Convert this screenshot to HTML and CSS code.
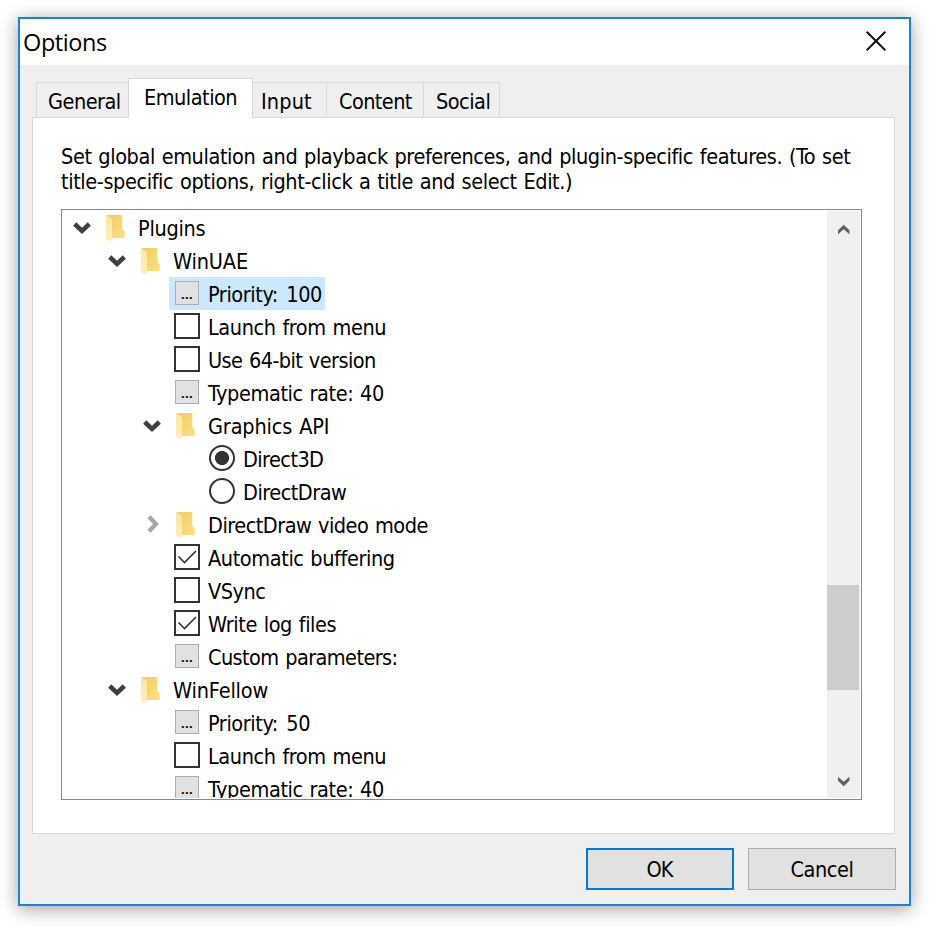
FILE: index.html
```html
<!DOCTYPE html>
<html lang="en">
<head>
<meta charset="utf-8">
<title>Options</title>
<link rel="stylesheet" href="styles.css">
</head>
<body>
<svg class="defs" aria-hidden="true">
  <defs>
    <linearGradient id="back" x1="0" y1="0" x2="1" y2="1"><stop offset="0" stop-color="#edcb68"/><stop offset="1" stop-color="#ffdf80"/></linearGradient>
    <linearGradient id="flap" x1="0" y1="0" x2="0" y2="1"><stop offset="0" stop-color="#ffe69e"/><stop offset="1" stop-color="#ffefbd"/></linearGradient>
    <symbol id="folder" viewBox="0 0 26 33">
      <path fill="url(#back)" d="M2 4H18.3V18L20.7 20.5V27H7V8Z"/>
      <path fill="url(#flap)" d="M2 4L8 8.3V27.3L6.7 30.8L2 28Z"/>
    </symbol>
    <symbol id="open" viewBox="0 0 37 33"><path fill="none" stroke="#404040" stroke-width="4.5" d="M12.7 13L20 19.9L27.3 13"/></symbol>
    <symbol id="closed" viewBox="0 0 37 33"><path fill="none" stroke="#a6a6a6" stroke-width="4.3" d="M17 8.8L24 16L17 23.2"/></symbol>
    <symbol id="tick" viewBox="0 0 22 22"><path fill="none" stroke="#333" stroke-width="1.6" d="M2.5 10.5L8.5 16.5L20 5"/></symbol>
  </defs>
</svg>
<main class="dialog">
  <header class="titlebar">
    <h1 class="title">Options</h1>
    <svg class="close" viewBox="0 0 20 20"><path d="M.7.7L19.3 19.3M19.3.7L.7 19.3"/></svg>
  </header>
  <nav class="tabs">
    <div class="tab general tighter">General</div>
    <div class="tab active emulation tighter">Emulation</div>
    <div class="tab input wide">Input</div>
    <div class="tab content tight">Content</div>
    <div class="tab social tighter">Social</div>
  </nav>
  <section class="pane">
    <p class="intro">Set global emulation and playback preferences, and plugin-specific features. (To set<br>title-specific options, right-click a title and select Edit.)</p>
    <div class="tree">
      <div class="rows">
        <div class="row"><svg class="chev"><use href="#open"/></svg><div class="item"><svg class="folder"><use href="#folder"/></svg><span class="label">Plugins</span></div></div>
        <div class="row l1"><svg class="chev"><use href="#open"/></svg><div class="item"><svg class="folder"><use href="#folder"/></svg><span class="label loose">WinUAE</span></div></div>
        <div class="row l2"><span class="chev"></span><div class="item selected"><span class="more">...</span><span class="label value">Priority: 100</span></div></div>
        <div class="row l2"><span class="chev"></span><div class="item"><span class="check"></span><span class="label snug">Launch from menu</span></div></div>
        <div class="row l2"><span class="chev"></span><div class="item"><span class="check"></span><span class="label tight">Use 64-bit version</span></div></div>
        <div class="row l2"><span class="chev"></span><div class="item"><span class="more">...</span><span class="label snug">Typematic rate: 40</span></div></div>
        <div class="row l2"><svg class="chev"><use href="#open"/></svg><div class="item"><svg class="folder"><use href="#folder"/></svg><span class="label loose">Graphics API</span></div></div>
        <div class="row l3"><span class="chev"></span><div class="item"><span class="radio on"></span><span class="label tight">Direct3D</span></div></div>
        <div class="row l3"><span class="chev"></span><div class="item"><span class="radio"></span><span class="label tighter">DirectDraw</span></div></div>
        <div class="row l2"><svg class="chev"><use href="#closed"/></svg><div class="item"><svg class="folder"><use href="#folder"/></svg><span class="label tighter">DirectDraw video mode</span></div></div>
        <div class="row l2"><span class="chev"></span><div class="item"><span class="check"><svg class="tick"><use href="#tick"/></svg></span><span class="label snug">Automatic buffering</span></div></div>
        <div class="row l2"><span class="chev"></span><div class="item"><span class="check"></span><span class="label tighter">VSync</span></div></div>
        <div class="row l2"><span class="chev"></span><div class="item"><span class="check"><svg class="tick"><use href="#tick"/></svg></span><span class="label snug">Write log files</span></div></div>
        <div class="row l2"><span class="chev"></span><div class="item"><span class="more">...</span><span class="label tight">Custom parameters:</span></div></div>
        <div class="row l1"><svg class="chev"><use href="#open"/></svg><div class="item"><svg class="folder"><use href="#folder"/></svg><span class="label loose">WinFellow</span></div></div>
        <div class="row l2"><span class="chev"></span><div class="item"><span class="more">...</span><span class="label value">Priority: 50</span></div></div>
        <div class="row l2"><span class="chev"></span><div class="item"><span class="check"></span><span class="label snug">Launch from menu</span></div></div>
        <div class="row l2"><span class="chev"></span><div class="item"><span class="more">...</span><span class="label snug">Typematic rate: 40</span></div></div>
      </div>
      <div class="scrollbar">
        <svg class="arrow" viewBox="0 0 33 36"><path d="M16.7 13.8L22.4 19.3V23.2L16.7 18.2L11 23.2V19.3Z"/></svg>
        <div class="track"><div class="thumb"></div></div>
        <svg class="arrow" viewBox="0 0 33 36"><path d="M16.7 24.2L22.4 18.7V14.8L16.7 19.8L11 14.8V18.7Z"/></svg>
      </div>
    </div>
  </section>
  <footer class="footer">
    <button class="btn primary">OK</button>
    <button class="btn">Cancel</button>
  </footer>
</main>
</body>
</html>
```
FILE: styles.css
```css
* { box-sizing: border-box; }
body {
  margin: 0;
  padding: 17px 0 0 18px;
  height: 928px;
  overflow: hidden;
  background: #fff;
  color: #000;
  font: 21.5px/26px "DejaVu Sans Condensed", "DejaVu Sans", sans-serif;
  letter-spacing: -0.28px;
  word-spacing: 1px;
}
.defs { position: absolute; width: 0; height: 0; }
.dialog {
  display: flex;
  flex-direction: column;
  width: 893px;
  height: 889px;
  border: 2px solid #1883d7;
  background: #efefef;
  box-shadow: 0 3px 17px rgba(0, 0, 0, .38);
}
.titlebar {
  display: flex;
  justify-content: space-between;
  height: 46px;
  padding: 0 23px 0 3px;
  background: #fff;
}
.title {
  margin: 0;
  font: 400 23.5px/47px "Open Sans", "Noto Sans", sans-serif;
  letter-spacing: -0.4px;
}
.close { width: 20px; height: 20px; margin-top: 12px; overflow: visible; }
.close path { fill: none; stroke: #111; stroke-width: 2; }

.tabs { display: flex; align-items: flex-end; height: 39px; margin: 13px 0 0 16px; }
.tab {
  height: 35px;
  padding: 6px 0 0 12px;
  border: 1px solid #d9d9d9;
  border-width: 1px 1px 0 0;
  white-space: nowrap;
}
.general { width: 92px; border-width: 1px 0 0 1px; padding-left: 11px; }
.emulation { width: 125px; }
.input { width: 74px; padding-left: 8px; }
.content { width: 97px; }
.social { width: 76px; }
.tab.active {
  position: relative;
  height: 40px;
  margin-bottom: -1px;
  padding: 6px 0 0 15px;
  border-width: 1px 1px 0;
  background: #fff;
}
.wide { letter-spacing: 0.15px; }
.loose { letter-spacing: -0.15px; }
.snug { letter-spacing: -0.4px; }
.tighter { letter-spacing: -0.5px; }
.tight { letter-spacing: -0.58px; }
.value { letter-spacing: -0.42px; word-spacing: 2.6px; }

.pane {
  width: 863px;
  height: 717px;
  margin-left: 12px;
  padding: 26px 0 0 28px;
  border: 1px solid #d9d9d9;
  background: #fff;
}
.intro { margin: 0; line-height: 25px; letter-spacing: -0.4px; white-space: nowrap; }
.tree {
  display: flex;
  width: 801px;
  height: 591px;
  margin-top: 15px;
  padding: 1px;
  border: 1px solid #828790;
}
.rows { flex: 1; overflow: hidden; margin-left: -1px; }
.row { display: flex; height: 33px; }
.l1 { padding-left: 35px; }
.l2 { padding-left: 70px; }
.l3 { padding-left: 105px; }
.chev { flex: none; width: 37px; height: 33px; }
.item { display: flex; padding: 0 4px 0 5px; }
.selected { width: 156px; background: #cce8ff; }
.folder { width: 26px; height: 33px; margin-right: 8px; }
.label { line-height: 35px; white-space: nowrap; }
.check, .radio {
  flex: none;
  width: 26px;
  height: 26px;
  margin: 3px 8px 0 0;
  border: 2px solid #333;
  background: #fff;
}
.radio { border-radius: 50%; }
.radio.on { background: radial-gradient(circle, #333 6.7px, #fff 7.4px); }
.tick { display: block; width: 22px; height: 22px; }
.more {
  flex: none;
  width: 24px;
  height: 24px;
  margin: 4px 9px 0 1px;
  border: 1px solid #adadad;
  background: #e1e1e1;
  font: 700 13px/24px "Noto Sans", sans-serif;
  letter-spacing: 0.4px;
  text-align: center;
}
.scrollbar { display: flex; flex-direction: column; width: 33px; background: #f0f0f0; }
.arrow { width: 33px; height: 36px; }
.arrow path { fill: #606060; }
.track { flex: 1; padding-top: 338px; }
.thumb { width: 32px; height: 105px; background: #cdcdcd; }

.footer { display: flex; justify-content: flex-end; gap: 14px; margin: 14px 13px 0 0; }
.btn {
  width: 148px;
  height: 42px;
  padding: 1px 0 0;
  border: 1px solid #adadad;
  background: #e1e1e1;
  color: #000;
  font: inherit;
  letter-spacing: -0.4px;
}
.primary { border: 2px solid #0078d7; letter-spacing: -0.9px; padding: 1px 1px 0 0; }
```
